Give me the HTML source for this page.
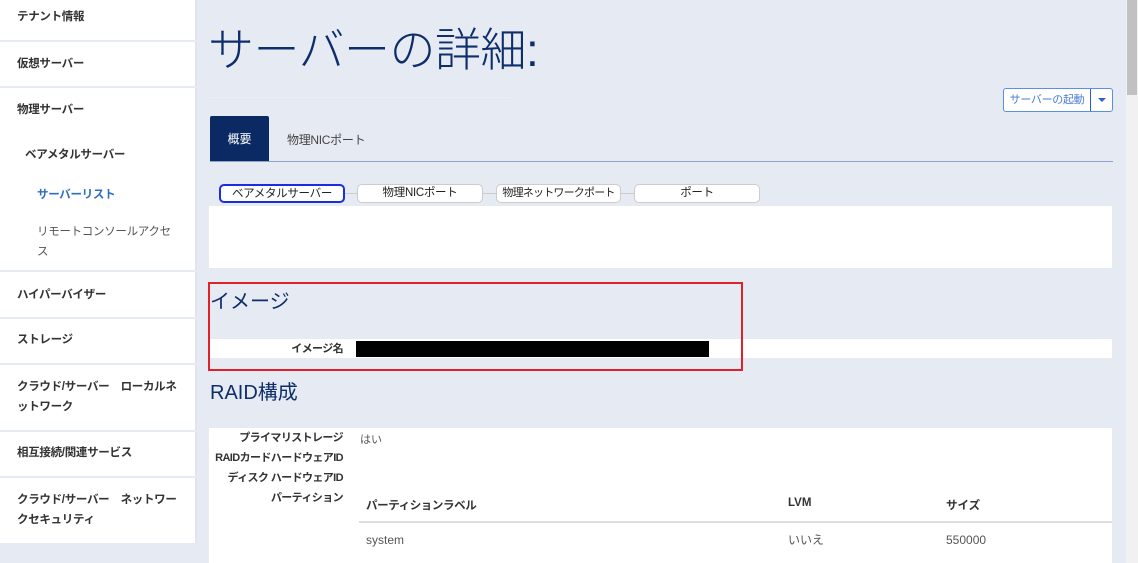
<!DOCTYPE html>
<html><head><meta charset="utf-8"><style>
*{margin:0;padding:0;box-sizing:border-box}
body{width:1138px;height:563px;overflow:hidden;background:#e6eaf3;font-family:"Liberation Sans","Noto Sans CJK JP",sans-serif;position:relative;color:#333}
.a{position:absolute;white-space:nowrap}
#side{position:absolute;left:0;top:0;width:197px;height:543px;background:#fff;border-right:2px solid #dfe4ee}
.sep{position:absolute;left:0;width:197px;height:2px;background:#e6eaf3}
.si{position:absolute;left:17px;font-size:11.5px;font-weight:bold;color:#333;line-height:20px;letter-spacing:-0.3px}
.pill{position:absolute;top:184px;height:19px;background:#fff;border:1.5px solid #ccc;border-radius:5px;font-size:11.5px;text-align:center;line-height:16px;color:#222;letter-spacing:-0.3px;overflow:hidden}
.lab{position:absolute;right:795px;font-size:11px;font-weight:bold;color:#333;line-height:14px;letter-spacing:-0.6px}
</style></head><body>
<div id="side">
<div class="sep" style="top:40px"></div>
<div class="sep" style="top:86px"></div>
<div class="sep" style="top:270px"></div>
<div class="sep" style="top:317px"></div>
<div class="sep" style="top:363px"></div>
<div class="sep" style="top:430px"></div>
<div class="sep" style="top:476px"></div>
<div class="si" style="top:7px">テナント情報</div>
<div class="si" style="top:54px">仮想サーバー</div>
<div class="si" style="top:100px">物理サーバー</div>
<div class="si" style="top:145px;left:25px">ベアメタルサーバー</div>
<div class="si" style="top:185px;left:37px;color:#2f6fc0">サーバーリスト</div>
<div class="si" style="top:222px;left:37px;font-weight:normal;color:#555;white-space:normal;width:140px">リモートコンソールアクセス</div>
<div class="si" style="top:285px">ハイパーバイザー</div>
<div class="si" style="top:330px">ストレージ</div>
<div class="si" style="top:377px;white-space:normal;width:165px">クラウド/サーバー　ローカルネットワーク</div>
<div class="si" style="top:443px">相互接続/関連サービス</div>
<div class="si" style="top:490px;white-space:normal;width:165px">クラウド/サーバー　ネットワークセキュリティ</div>
</div>

<div class="a" style="left:208px;top:20px;font-size:46px;font-weight:300;color:#0d2d6b;line-height:60px;letter-spacing:-0.5px">サーバーの詳細:</div>
<div class="a" style="left:210px;top:97px;width:300px;height:1px;background:#eceff5"></div>
<div class="a" style="left:1003px;top:88px;width:110px;height:24px;border:1px solid #5b8ee6;border-radius:3px;background:#fff"></div>
<div class="a" style="left:1004px;top:89px;width:86px;height:22px;font-size:11px;color:#4a7bd6;text-align:center;line-height:22px;letter-spacing:-0.3px">サーバーの起動</div>
<div class="a" style="left:1090px;top:89px;width:1px;height:22px;background:#2a5fd0"></div>
<div class="a" style="left:1098px;top:98px;width:0;height:0;border-left:4px solid transparent;border-right:4px solid transparent;border-top:4px solid #2a5fd0"></div>

<div class="a" style="left:210px;top:116px;width:59px;height:46px;background:#0b2a63;border-radius:2px 2px 0 0;color:#fff;font-size:12px;text-align:center;line-height:46px">概要</div>
<div class="a" style="left:287px;top:131px;font-size:12px;color:#444;letter-spacing:-0.3px">物理NICポート</div>
<div class="a" style="left:210px;top:161px;width:903px;height:1px;background:#8fa3c8"></div>

<div class="a" style="left:340px;top:193px;width:300px;height:1px;background:#ccc"></div>
<div class="pill" style="left:219px;width:126px;border:2px solid #1a2de0">ベアメタルサーバー</div>
<div class="pill" style="left:357px;width:126px">物理NICポート</div>
<div class="pill" style="left:496px;width:125px;font-size:11px;letter-spacing:-0.8px">物理ネットワークポート</div>
<div class="pill" style="left:634px;width:126px">ポート</div>
<div class="a" style="left:209px;top:206px;width:903px;height:62px;background:#fff"></div>

<div class="a" style="left:209px;top:339px;width:903px;height:19px;background:#fff"></div>
<div class="a" style="left:208px;top:282px;width:535px;height:89px;border:2px solid #e0202a"></div>
<div class="a" style="left:210px;top:285px;font-size:20px;color:#0d2d6b">イメージ</div>
<div class="lab" style="top:342px">イメージ名</div>
<div class="a" style="left:356px;top:341px;width:353px;height:16px;background:#000"></div>

<div class="a" style="left:210px;top:376px;font-size:20px;color:#0d2d6b">RAID構成</div>
<div class="a" style="left:209px;top:428px;width:903px;height:135px;background:#fff"></div>
<div class="lab" style="top:431px">プライマリストレージ</div>
<div class="lab" style="top:451px">RAIDカードハードウェアID</div>
<div class="lab" style="top:471px">ディスク ハードウェアID</div>
<div class="lab" style="top:491px">パーティション</div>
<div class="a" style="left:360px;top:431px;font-size:11px;color:#555">はい</div>
<div class="a" style="left:366px;top:497px;font-size:11.5px;font-weight:bold;color:#333;letter-spacing:-0.4px">パーティションラベル</div>
<div class="a" style="left:788px;top:497px;font-size:11.5px;font-weight:bold;color:#333">LVM</div>
<div class="a" style="left:946px;top:497px;font-size:11.5px;font-weight:bold;color:#333">サイズ</div>
<div class="a" style="left:359px;top:521px;width:753px;height:2px;background:#ddd"></div>
<div class="a" style="left:366px;top:532px;font-size:12px;color:#555;line-height:16px">system</div>
<div class="a" style="left:788px;top:532px;font-size:12px;color:#555;line-height:16px">いいえ</div>
<div class="a" style="left:946px;top:532px;font-size:12px;color:#555;line-height:16px">550000</div>

<div class="a" style="left:1126px;top:0;width:12px;height:563px;background:#f1f1f1"></div>
<div class="a" style="left:1127px;top:0;width:10px;height:95px;background:#c1c1c1"></div>
</body></html>
